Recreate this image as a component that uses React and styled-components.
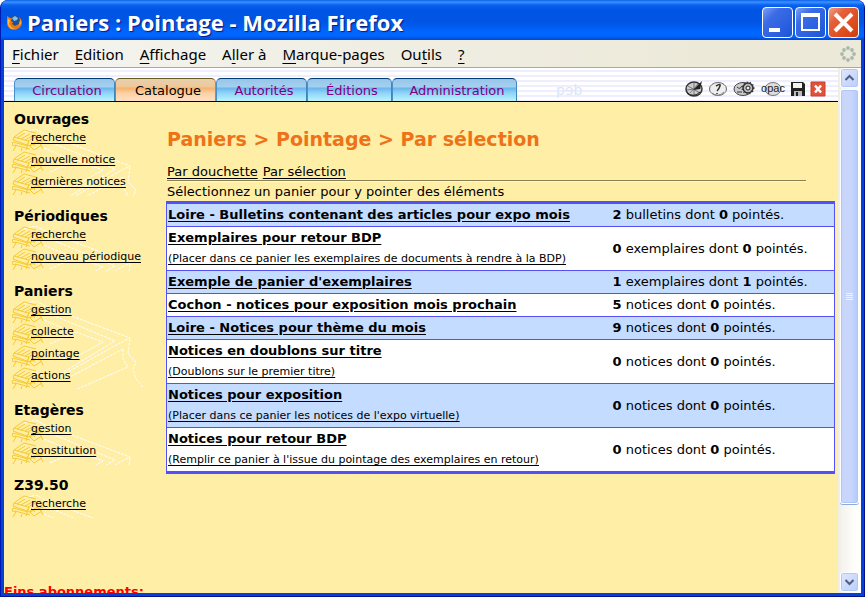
import React from "react";
import styled, { createGlobalStyle } from "styled-components";

const Global = createGlobalStyle`
  *{box-sizing:border-box}
  html,body,#root{height:100%;margin:0}
  body{font-family:"DejaVu Sans",sans-serif;font-size:13px;color:#000;overflow:hidden}
  a{color:inherit}
`;

const Window = styled.div`
  height:100vh;display:flex;flex-direction:column;overflow:hidden;
  background:#0540d8;
  border:solid;border-width:0 1px 1px;border-color:#0831c4 #00138c #00138c #0019b0;
  border-radius:8px 8px 0 0;
`;
const TitleBar = styled.header`
  flex:none;height:40px;display:flex;align-items:center;padding:4px 5px 0 5px;
  background:linear-gradient(#0a5fe8 0,#3a93ff 2px,#0a62f0 5px,#0054e3 10px,#0055e5 22px,#0066ff 32px,#0066ff 36px,#0048d0 40px);
  svg{flex:none}
`;
const Title = styled.h1`
  flex:1;margin:0 0 0 4px;font:bold 22px/32px "Open Sans","Noto Sans",sans-serif;color:#fff;
  text-shadow:1px 1px 1px #0a1883;white-space:nowrap;
`;
const Controls = styled.div`display:flex;gap:2px;`;
const WinButton = styled.button`
  width:31px;height:31px;padding:0;border:1px solid #fff;border-radius:4px;display:grid;place-items:center;
  background:${p => p.$close ? "linear-gradient(135deg,#f0a088,#e5603a 30%,#dc4818 75%,#c84010)" : "linear-gradient(135deg,#7ba0f5,#3c6ce6 30%,#2a5fe0 70%,#1a56d0)"};
`;
const Body = styled.div`
  flex:1;min-height:0;display:flex;flex-direction:column;margin:0 3px 3px;
`;
const MenuBar = styled.nav`
  flex:none;height:28px;display:flex;align-items:center;justify-content:space-between;padding:0 5px 0 8px;
  background:linear-gradient(90deg,#f4f4f0,#ece9d8 85%);border-bottom:1px solid #aca899;
`;
const Menus = styled.div`display:flex;gap:16px;`;
const MenuItem = styled.button`
  border:0;padding:0;background:none;font:15px/24px "Noto Sans","Open Sans",sans-serif;color:#000;white-space:nowrap;
  u{text-underline-offset:3px;text-decoration-thickness:1px}
`;
const View = styled.div`flex:1;min-height:0;display:flex;background:#ffeea6;`;
const Page = styled.div`flex:1;min-width:0;overflow:hidden;display:flex;flex-direction:column;`;
const TabBar = styled.div`
  flex:none;height:34px;display:flex;align-items:flex-end;padding-left:10px;border-bottom:1px solid #000;
  background:repeating-linear-gradient(#fff 0 2px,#eeeeff 2px 4px,#fff 4px 5px);
`;
const Tab = styled.a`
  height:23px;width:${p => p.$w}px;padding-left:5px;text-align:center;text-decoration:none;line-height:23px;
  border:1px solid;border-bottom:0;border-radius:5px 5px 0 0;
  color:${p => p.$active ? "#000" : "#800080"};
  border-color:${p => p.$active ? "#6b5a20 #d08030 #fff #a08050" : "#003c74 #3f87bf #fff #4a90c8"};
  background:${p => p.$active
    ? "linear-gradient(#e8d0b0,#efc896 8px,#f6b06c 9px,#fbd0a4 14px,#ffe0c4)"
    : "linear-gradient(#98c4e8,#a4d0f0 8px,#68b4ec 9px,#90d4f8 14px,#b8f4ff)"};
`;
const Watermark = styled.span`
  margin-left:39px;flex:1;font:14px/21px "DejaVu Sans",sans-serif;color:#dce6f6;
`;
const Tools = styled.div`display:flex;align-items:center;gap:4px;height:24px;margin-right:12px;`;
const Tool = styled.a`display:block;height:20px;svg{display:block}`;

const Columns = styled.div`flex:1;min-height:0;display:flex;`;
const Side = styled.aside`flex:none;width:162px;padding-top:8px;display:flex;flex-direction:column;`;
const Group = styled.section`margin-bottom:11px;`;
const GroupTitle = styled.h2`margin:0;padding-left:10px;font-size:14px;line-height:19px;`;
const Links = styled.ul`
  position:relative;overflow:hidden;margin:0 0 0 8px;padding:0 0 1px;list-style:none;z-index:0;
`;
const BigBook = styled.svg`position:absolute;top:0;left:0;z-index:-1;`;
const Item = styled.li`height:22px;display:flex;align-items:flex-start;font-size:11px;line-height:17px;`;
const BookMark = styled.svg`flex:none;margin-right:-13px;`;
const ItemLink = styled.a`position:relative;white-space:nowrap;text-underline-offset:2px;`;
const Notice = styled.p`margin:54px 0 0;font-weight:bold;font-size:13px;line-height:18px;color:#f00;white-space:nowrap;`;

const Main = styled.main`flex:1;min-width:0;padding:24px 3px 0 0;`;
const Heading = styled.h2`margin:0 0 12px 1px;font-size:19px;line-height:27px;color:#ee7218;`;
const Modes = styled.div`
  margin:0 29px 0 1px;height:16px;line-height:14px;display:flex;gap:5px;
  border-bottom:1px solid #8a8050;box-shadow:0 1px #fff8d8;
  a{text-underline-offset:2px}
`;
const Hint = styled.p`margin:0 0 0 1px;padding-top:1px;line-height:20px;height:20px;`;
const Baskets = styled.table`
  width:100%;border-collapse:collapse;border:1px solid #5350f8;border-width:3px 1px;
`;
const Row = styled.tr`
  background:${p => p.$odd ? "#c4dcff" : "#fff"};
  td{border-bottom:1px solid #5350f8;padding:1px;line-height:20px;vertical-align:middle;white-space:nowrap;}
  td:first-child{width:445px}
`;
const BasketLink = styled.a`
  display:block;text-underline-offset:2px;
  small{display:block;font-size:11px;line-height:21px;text-decoration:underline;text-underline-offset:2px}
`;
const ScrollBar = styled.div`
  flex:none;width:23px;display:flex;flex-direction:column;padding:0 2px 1px;
  background:linear-gradient(90deg,#eeede5,#f6f5f0 6px,#fefefb 18px);
`;
const Arrow = styled.button`
  flex:none;height:20px;padding:0;display:grid;place-items:center;border:1px solid #fff;border-radius:3px;
  background:linear-gradient(135deg,#e0e8ff,#bccdf8);box-shadow:inset 0 0 0 1px #b4c8f6;
`;
const Track = styled.div`flex:1;min-height:0;display:flex;flex-direction:column;padding-top:1px;`;
const Thumb = styled.div`
  height:86%;display:grid;place-items:center;border:1px solid #fff;border-radius:3px;
  background:linear-gradient(90deg,#c8d6fc 60%,#b4c8f8);box-shadow:inset 0 0 0 1px #b0c6f4,0 1px 0 #8ea9dc;
`;

const menus = [["", "F", "ichier"], ["", "E", "dition"], ["", "A", "ffichage"], ["A", "l", "ler à"], ["", "M", "arque-pages"], ["Ou", "t", "ils"], ["", "?", ""]];
const tabs = [["Circulation", 101], ["Catalogue", 101, true], ["Autorités", 91], ["Éditions", 85], ["Administration", 125]];
const groups = [
  ["Ouvrages", ["recherche", "nouvelle notice", "dernières notices"]],
  ["Périodiques", ["recherche", "nouveau périodique"]],
  ["Paniers", ["gestion", "collecte", "pointage", "actions"]],
  ["Etagères", ["gestion", "constitution"]],
  ["Z39.50", ["recherche"]],
];
const baskets = [
  ["Loire - Bulletins contenant des articles pour expo mois", "", 2, "bulletins", 0],
  ["Exemplaires pour retour BDP", "(Placer dans ce panier les exemplaires de documents à rendre à la BDP)", 0, "exemplaires", 0],
  ["Exemple de panier d'exemplaires", "", 1, "exemplaires", 1],
  ["Cochon - notices pour exposition mois prochain", "", 5, "notices", 0],
  ["Loire - Notices pour thème du mois", "", 9, "notices", 0],
  ["Notices en doublons sur titre", "(Doublons sur le premier titre)", 0, "notices", 0],
  ["Notices pour exposition", "(Placer dans ce panier les notices de l'expo virtuelle)", 0, "notices", 0],
  ["Notices pour retour BDP", "(Remplir ce panier à l'issue du pointage des exemplaires en retour)", 0, "notices", 0],
];

const Firefox = () => (
  <svg width="17" height="17" viewBox="0 0 17 17" aria-hidden="true">
    <circle cx="9" cy="8" r="6.5" fill="#23508f" />
    <path d="M6 4l3-2 3 2-1 2-3 1z" fill="#7fc0e8" />
    <path d="M1 2l3 2 2 0-1 3 2 1-1 2 3 2 4-2 1-4-1-3c4 3 4 8 0 11-5 4-12 1-12-5z" fill="#e97915" />
    <path d="M2 5l2 1-1 4 3 4 3 1-3 0C2 13 1 9 2 5zM14 6l1 3-2 3z" fill="#ffbd3c" />
  </svg>
);
const Throbber = () => (
  <svg width="16" height="16" viewBox="0 0 16 16" fill="#a9b9b0" aria-hidden="true">
    {[[8, 2], [12, 4], [14, 8], [12, 12], [8, 14], [4, 12], [2, 8], [4, 4]].map(([x, y]) => <circle key={`${x}-${y}`} cx={x} cy={y} r="1.9" />)}
  </svg>
);
const SmallBook = () => (
  <BookMark width="32" height="22" viewBox="0 0 32 22" fill="none" stroke="#f6ca30" aria-hidden="true">
    <path d="M2 8L12 1l12 3M2 8l14 4 9-5M2 8l-1 3 14 5 2-4M1 13l15 4 14-7M1 13l-1 3 4 1M17 12l-3 9M17 17l14-5M4 17l-3 5M10 19l-1 3M18 17l4 4 8-5M5 9l8-5M9 10l9-5M13 11l9-5M19 13l4 4M24 10l3 4M28 14l3 6M3 16l15 4" />
  </BookMark>
);
const LargeBook = () => (
  <BigBook width="134" height="88" viewBox="0 0 134 88" fill="none" stroke="#fff" strokeDasharray="3 1" aria-hidden="true">
    <path d="M12 3L24 0l9 5 85 32-8 4-67 37M33 11l70 29-60 36M32 19l28 12M38 43l26-12 27 10-32 18-24-6M111 48L56 77M111 48v10l5 8-60 26M118 38l-2 15 8 8-3 7 3 10 7 8M20 70l20 8" />
  </BigBook>
);
const icons = [
  ["Tableau de bord", 20, <><ellipse cx="10" cy="10" rx="8" ry="7" fill="#ccc" stroke="#333" strokeWidth="1.5" /><path d="M4 7l12 7M10 4v12M3 11l14-2M6 14l8-9" stroke="#777" /><path d="M9 11l9-9-2 8z" fill="#222" /><path d="M3 14q7 5 13-1" stroke="#222" fill="none" /></>],
  ["Aide", 21, <><ellipse cx="10" cy="10" rx="8.5" ry="6.5" fill="#eee" stroke="#666" /><path d="M8 7q5-3 4 0t-3 5M9 14v1" stroke="#333" fill="none" strokeWidth="1.5" /><path d="M4 14q6 5 12-1" stroke="#888" fill="none" /></>],
  ["Paramètres", 23, <><ellipse cx="10" cy="10" rx="9" ry="6.5" fill="#ccc" stroke="#444" /><path d="M4 8q3 3 5-1M4 13h5" stroke="#333" fill="none" /><circle cx="15" cy="9" r="5" fill="#bbb" stroke="#333" strokeWidth="1.5" /><circle cx="15" cy="9" r="5.5" fill="none" stroke="#333" strokeDasharray="1 2" strokeWidth="2" /><circle cx="15" cy="9" r="2" fill="#eee" stroke="#222" /></>],
  ["OPAC", 26, <><ellipse cx="13" cy="10" rx="8" ry="6.5" fill="#ddd" stroke="#777" /><text x="13" y="13" textAnchor="middle" fontFamily="Liberation Sans, sans-serif" fontSize="11" fill="#222">opac</text></>],
  ["Sauvegarde", 16, <><path d="M1 3h12l2 2v12H1z" fill="#222" /><path d="M3 4h9v5H3z" fill="#f2f2f2" /><path d="M4 12h8v5H4z" fill="#bbb" /><path d="M6 13h2v4H6z" fill="#222" /></>],
  ["Fermer", 16, <><path d="M1 3h14v14H1z" fill="#e0503a" stroke="#c8402a" /><path d="M5 6.5l6 7M11 6.5l-6 7" stroke="#fff" strokeWidth="2.5" /></>],
];

export default function App() {
  return (
    <><Global />
      <Window>
        <TitleBar>
          <Firefox /><Title>Paniers : Pointage - Mozilla Firefox</Title>
          <Controls>
            <WinButton aria-label="Réduire"><svg width="25" height="25"><path d="M4 20h11" stroke="#fff" strokeWidth="4" /></svg></WinButton>
            <WinButton aria-label="Agrandir"><svg width="25" height="25"><path d="M4 5h17v15H4zM3 5h19" stroke="#fff" strokeWidth="2" fill="none" /><path d="M3 5h19" stroke="#fff" strokeWidth="4" /></svg></WinButton>
            <WinButton $close aria-label="Fermer"><svg width="25" height="25"><path d="M4 4l17 17M21 4L4 21" stroke="#fff" strokeWidth="4" /></svg></WinButton>
          </Controls>
        </TitleBar>
        <Body>
          <MenuBar>
            <Menus>{menus.map(([a, k, b]) => <MenuItem key={a + k + b}>{a}<u>{k}</u>{b}</MenuItem>)}</Menus>
            <Throbber />
          </MenuBar>
          <View>
            <Page>
              <TabBar>
                {tabs.map(([name, w, active]) => <Tab key={name} href="#" $w={w} $active={active}>{name}</Tab>)}
                <Watermark aria-hidden="true">pɘb</Watermark>
                <Tools>{icons.map(([name, w, art]) => <Tool key={name} href="#" aria-label={name}><svg width={w} height="20">{art}</svg></Tool>)}</Tools>
              </TabBar>
              <Columns>
                <Side>
                  {groups.map(([name, links]) => (
                    <Group key={name}>
                      <GroupTitle>{name}</GroupTitle>
                      <Links><LargeBook />{links.map(l => <Item key={l}><SmallBook /><ItemLink href="#">{l}</ItemLink></Item>)}</Links>
                    </Group>
                  ))}
                  <Notice>Fins abonnements:</Notice>
                </Side>
                <Main>
                  <Heading>Paniers &gt; Pointage &gt; Par sélection</Heading>
                  <Modes><a href="#">Par douchette</a><a href="#">Par sélection</a></Modes>
                  <Hint>Sélectionnez un panier pour y pointer des éléments</Hint>
                  <Baskets><tbody>
                    {baskets.map(([name, note, n, kind, done], i) => (
                      <Row key={name} $odd={i % 2 === 0}>
                        <td><BasketLink href="#"><b>{name}</b>{note && <small>{note}</small>}</BasketLink></td>
                        <td><b>{n}</b> {kind} dont <b>{done}</b> pointés.</td>
                      </Row>
                    ))}
                  </tbody></Baskets>
                </Main>
              </Columns>
            </Page>
            <ScrollBar>
              <Arrow aria-label="Défiler vers le haut"><svg width="11" height="8"><path d="M1.5 6l4-4 4 4" fill="none" stroke="#4d6185" strokeWidth="2" /></svg></Arrow>
              <Track><Thumb><svg width="7" height="8"><path d="M0 .5h7M0 2.5h7M0 4.5h7M0 6.5h7" stroke="#eef4ff" /></svg></Thumb></Track>
              <Arrow aria-label="Défiler vers le bas"><svg width="11" height="8"><path d="M1.5 2l4 4 4-4" fill="none" stroke="#4d6185" strokeWidth="2" /></svg></Arrow>
            </ScrollBar>
          </View>
        </Body>
      </Window>
    </>
  );
}
